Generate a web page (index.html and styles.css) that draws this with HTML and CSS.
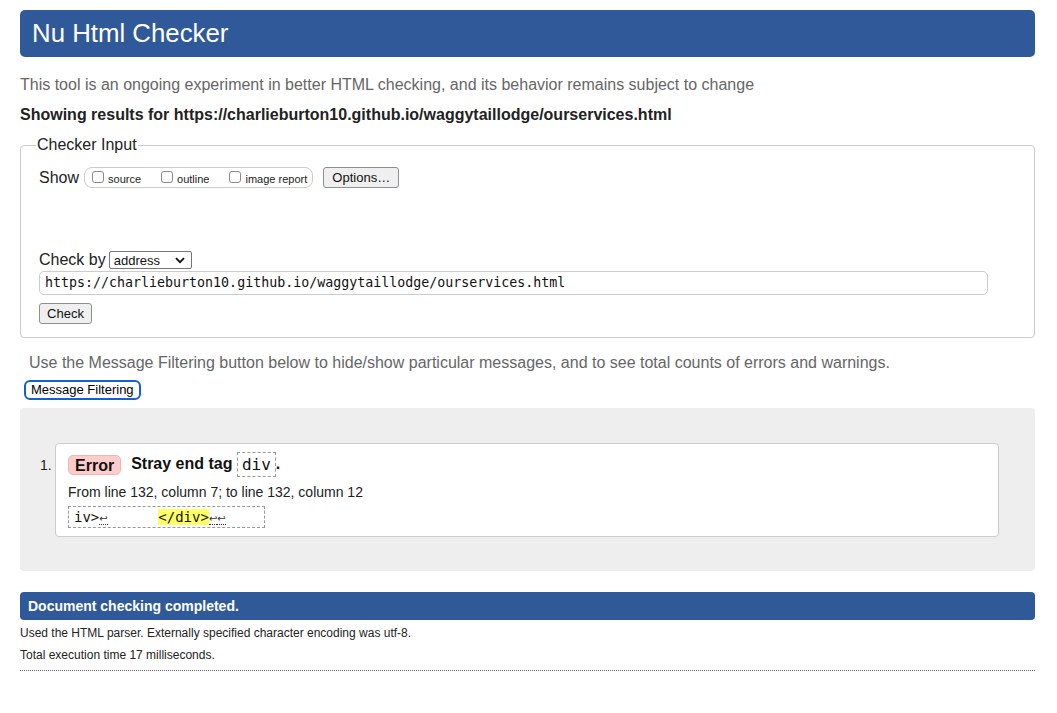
FILE: index.html
```html
<!DOCTYPE html>
<html lang="en">
<head>
<meta charset="utf-8">
<title>Showing results for https://charlieburton10.github.io/waggytaillodge/ourservices.html - Nu Html Checker</title>
<link rel="stylesheet" href="styles.css">
</head>
<body>
<h1 class="banner">Nu Html Checker</h1>
<p class="intro">This tool is an ongoing experiment in better HTML checking, and its behavior remains subject to change</p>
<p class="showing">Showing results for https://charlieburton10.github.io/waggytaillodge/ourservices.html</p>

<fieldset class="checker">
  <legend class="legend">Checker Input</legend>
  <div class="row show-row">
    <span class="show-label">Show</span>
    <span class="show-group">
      <label class="opt"><span class="cb"></span><span class="opt-text">source</span></label>
      <label class="opt"><span class="cb"></span><span class="opt-text">outline</span></label>
      <label class="opt last"><span class="cb"></span><span class="opt-text">image report</span></label>
    </span>
    <span class="btn options-btn">Options…</span>
  </div>
  <div class="row checkby-row">
    <span class="checkby-label">Check by</span>
    <span class="select"><span>address</span><svg class="chev" width="10" height="7" viewBox="0 0 10 7"><path d="M1 1.2 L5 5.2 L9 1.2" fill="none" stroke="#111" stroke-width="1.8"/></svg></span>
  </div>
  <div class="url-input">https://charlieburton10.github.io/waggytaillodge/ourservices.html</div>
  <div class="row check-row"><span class="btn check-btn">Check</span></div>
</fieldset>

<p class="filter-note">Use the Message Filtering button below to hide/show particular messages, and to see total counts of errors and warnings.</p>
<div class="filter-row"><span class="filter-btn">Message Filtering</span></div>

<div class="results">
  <ol class="messages">
    <li class="msg-item">
      <span class="num">1.</span>
      <div class="card">
        <div class="msg-head">
          <span class="badge">Error</span>
          <span class="msg-text">Stray end tag <code class="tag">div</code>.</span>
        </div>
        <div class="location">From line 132, column 7; to line 132, column 12</div>
        <div class="extract"><code>iv&gt;<span class="lf">↩</span>      <mark class="hl">&lt;/div&gt;</mark><span class="lf">↩</span><span class="lf">↩</span>    </code></div>
      </div>
    </li>
  </ol>
</div>

<div class="done">Document checking completed.</div>
<p class="meta first">Used the HTML parser. Externally specified character encoding was utf-8.</p>
<p class="meta">Total execution time 17 milliseconds.</p>
<hr class="rule">
</body>
</html>
```
FILE: styles.css
```css
html, body {
  background: #fff;
}
body {
  margin: 0;
  padding: 10px 22px 0 20px;
  font-family: "Liberation Sans", Arial, Helvetica, sans-serif;
  color: #222;
  font-size: 16px;
}
.banner {
  margin: 0;
  height: 47px;
  line-height: 46px;
  padding: 0 12px;
  background: #30599a;
  color: #fff;
  font-size: 25.8px;
  font-weight: normal;
  border-radius: 5px;
}
.intro {
  margin: 18px 0 0;
  line-height: 20px;
  color: #666;
}
.showing {
  margin: 10px 0 0;
  line-height: 20px;
  font-weight: bold;
  color: #222;
}
.checker {
  margin: 10px 0 0;
  padding: 0 18px 13px 18px;
  border: 1px solid #ccc;
  border-radius: 4px;
  min-width: 0;
}
.legend {
  padding: 0 1px;
  margin-left: -3px;
  font-size: 16px;
  line-height: 20px;
  color: #222;
}
.row {
  display: flex;
  align-items: center;
}
.show-row {
  margin-top: 12px;
  height: 21px;
}
.show-label {
  margin-right: 5px;
  line-height: 20px;
}
.show-group {
  display: flex;
  align-items: center;
  height: 19px;
  padding: 0 5px 0 7px;
  border: 1px solid #ccc;
  border-radius: 8px;
}
.opt {
  display: flex;
  align-items: center;
  margin-right: 20px;
}
.opt.last {
  margin-right: 0;
}
.cb {
  width: 10px;
  height: 10px;
  border: 1px solid #8a8a8a;
  border-radius: 3px;
  background: #fff;
  margin-right: 4px;
  position: relative;
  top: -1px;
}
.opt-text {
  font-size: 11px;
  line-height: 12px;
  position: relative;
  top: 1px;
}
.btn {
  display: inline-block;
  box-sizing: border-box;
  font-size: 13px;
  color: #111;
  background: #efefef;
  border: 1px solid #8f8f8f;
  border-radius: 3px;
  text-align: center;
}
.options-btn {
  margin-left: 10px;
  width: 76px;
  height: 21px;
  line-height: 19px;
}
.checkby-row {
  margin-top: 62px;
  height: 20px;
}
.checkby-label {
  line-height: 20px;
  margin-right: 3px;
}
.select {
  box-sizing: border-box;
  width: 83px;
  height: 18px;
  display: flex;
  align-items: center;
  justify-content: space-between;
  padding: 0 6px 0 4px;
  border: 1px solid #767676;
  border-radius: 2px;
  font-size: 13px;
  color: #111;
  background: #fff;
}
.chev {
  display: block;
}
.url-input {
  box-sizing: border-box;
  margin-top: 1px;
  width: 949px;
  height: 24px;
  line-height: 22px;
  padding: 0 5px;
  border: 1px solid #ccc;
  border-radius: 5px;
  font-family: "DejaVu Sans Mono", Menlo, monospace;
  font-size: 13.3px;
  color: #111;
}
.check-row {
  margin-top: 8px;
}
.check-btn {
  width: 53px;
  height: 21px;
  line-height: 19px;
}
.filter-note {
  margin: 15px 0 0;
  padding-left: 9px;
  line-height: 20px;
  color: #666;
}
.filter-row {
  margin-top: 7px;
  padding-left: 4px;
}
.filter-btn {
  display: inline-block;
  box-sizing: border-box;
  height: 20px;
  line-height: 16px;
  padding: 0 5px;
  border: 2px solid #1160d6;
  border-radius: 6px;
  font-size: 13px;
  color: #000;
  background: #fff;
}
.results {
  margin-top: 8px;
  background: #eee;
  border-radius: 4px;
  padding: 35px 36px 34px 20px;
}
.messages {
  list-style: none;
  margin: 0;
  padding: 0;
}
.msg-item {
  display: flex;
  align-items: flex-start;
}
.num {
  width: 15px;
  flex: none;
  font-size: 14px;
  line-height: 20px;
  margin-top: 12px;
}
.card {
  flex: 1;
  background: #fff;
  border: 1px solid #ccc;
  border-radius: 4px;
  padding: 8px 12px 8px 12px;
}
.msg-head {
  display: flex;
  align-items: center;
  height: 25px;
}
.badge {
  display: inline-block;
  height: 20px;
  line-height: 19px;
  padding: 0 6px;
  background: #fcc;
  border: 1px solid #f2b5b5;
  box-sizing: border-box;
  border-radius: 5px;
  font-weight: bold;
  color: #111;
  margin-right: 10px;
}
.msg-text {
  font-weight: bold;
  color: #111;
}
.tag {
  display: inline-block;
  box-sizing: border-box;
  height: 25px;
  line-height: 23px;
  padding: 0 4px;
  border: 1px dashed #999;
  font-family: "DejaVu Sans Mono", Menlo, monospace;
  font-size: 16px;
  font-weight: normal;
  vertical-align: middle;
}
.location {
  margin-top: 6px;
  font-size: 14px;
  line-height: 18px;
  color: #222;
}
.extract {
  display: inline-block;
  margin-top: 5px;
  box-sizing: border-box;
  height: 22px;
  padding: 0 5px;
  border: 1px dashed #999;
  line-height: 20px;
}
.extract code {
  font-family: "DejaVu Sans Mono", Menlo, monospace;
  font-size: 14px;
  white-space: pre;
  color: #111;
}
.lf {
  display: inline-block;
  box-sizing: border-box;
  width: 8.43px;
  height: 12px;
  line-height: 12px;
  overflow: hidden;
  text-align: left;
  font-family: "DejaVu Sans", sans-serif;
  font-size: 10px;
  color: #333;
  border-bottom: 1px dotted #333;
  vertical-align: -3px;
}
.hl {
  background: #ff6;
  color: #111;
}
.done {
  margin-top: 21px;
  height: 28px;
  line-height: 28px;
  padding-left: 8px;
  background: #30599a;
  color: #fff;
  font-weight: bold;
  font-size: 14px;
  border-radius: 4px;
}
.meta {
  margin: 6px 0 0;
  font-size: 12px;
  line-height: 16px;
  color: #222;
}
.meta.first {
  margin-top: 5px;
}
.rule {
  margin: 7px 0 0;
  border: 0;
  border-top: 1px dotted #666;
  height: 0;
}
```
